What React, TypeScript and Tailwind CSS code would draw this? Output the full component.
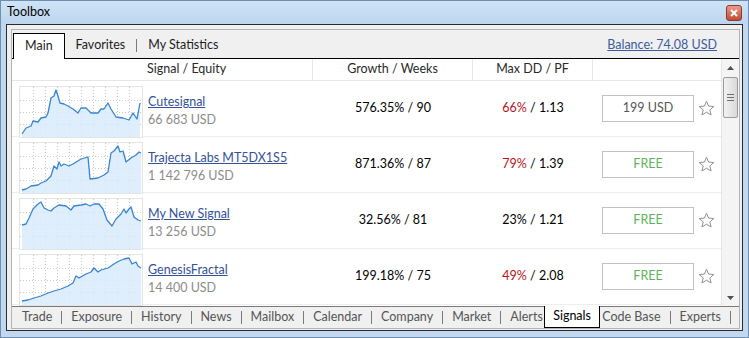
import React from 'react';

interface SignalRow {
  name: string;
  equity: string;
  growth: string;
  dd: string;
  ddRed: boolean;
  pf: string;
  price: string;
  points: string;
}

const rows: SignalRow[] = [
  {
    name: 'Cutesignal',
    equity: '66 683 USD',
    growth: '576.35% / 90',
    dd: '66%',
    ddRed: true,
    pf: '1.13',
    price: '199 USD',
    points:
      '2,47 6,41 11,39 13,34 18,35 21,31 26,30 28,26 31,11 34,9 36,3 38,9 40,16 44,17 48,19 53,22 58,26 61,21 66,21 71,26 78,26 81,22 84,22 88,16 91,22 96,30 103,31 109,33 113,26 117,32 120,16',
  },
  {
    name: 'Trajecta Labs MT5DX1S5',
    equity: '1 142 796 USD',
    growth: '871.36% / 87',
    dd: '79%',
    ddRed: true,
    pf: '1.39',
    price: 'FREE',
    points:
      '2,47 6,46 11,43 18,42 21,40 26,38 31,33 34,23 37,26 39,19 41,23 44,21 49,23 53,21 61,16 68,14 70,36 78,35 84,32 88,29 91,10 94,8 98,3 100,9 103,8 106,19 111,15 116,12 119,9 121,10',
  },
  {
    name: 'My New Signal',
    equity: '13 256 USD',
    growth: '32.56% / 81',
    dd: '23%',
    ddRed: false,
    pf: '1.21',
    price: 'FREE',
    points:
      '2,26 6,25 9,19 13,10 18,5 21,3 24,9 28,11 31,12 34,9 39,6 46,7 51,11 54,7 61,6 66,5 70,7 74,5 79,5 83,10 87,21 92,27 96,20 101,15 104,10 106,14 109,10 111,8 114,18 118,21 121,22',
  },
  {
    name: 'GenesisFractal',
    equity: '14 400 USD',
    growth: '199.18% / 75',
    dd: '49%',
    ddRed: true,
    pf: '2.08',
    price: 'FREE',
    points:
      '2,46 8,45 14,43 21,41 28,38 34,36 41,34 48,31 53,28 56,21 59,23 66,19 71,17 74,13 78,17 81,15 88,13 94,9 99,6 104,4 109,3 112,9 116,7 118,11 121,13',
  },
];

const bottomTabs = ['Trade', 'Exposure', 'History', 'News', 'Mailbox', 'Calendar', 'Company', 'Market', 'Alerts', 'Signals', 'Code Base', 'Experts'];

function Equity({ points }: { points: string }) {
  const pts = points.split(' ');
  const first = pts[0].split(',')[0];
  const last = pts[pts.length - 1].split(',')[0];
  const area = `${first},50 ${points} ${last},50`;
  const vx = [13, 25, 37, 49, 61, 73, 85, 97, 109];
  const hy = [13, 25, 37];
  return (
    <svg width="122" height="50" viewBox="0 0 122 50" className="block border border-[#e4e4e4] bg-white box-content">
      {vx.map((x) => (
        <line key={'v' + x} x1={x + 0.5} y1="0" x2={x + 0.5} y2="50" stroke="#c9c9c9" strokeDasharray="1 2" />
      ))}
      {hy.map((y) => (
        <line key={'h' + y} x1="0" y1={y + 0.5} x2="122" y2={y + 0.5} stroke="#c9c9c9" strokeDasharray="1 2" />
      ))}
      <polygon points={area} fill="#d8ebfc" fillOpacity="0.85" />
      <polyline points={points} fill="none" stroke="#3a84d4" strokeWidth="1.3" strokeLinejoin="round" />
    </svg>
  );
}

function Star() {
  return (
    <svg width="17" height="17" viewBox="0 0 17 17" className="block">
      <polygon
        points="8.5,1.2 10.6,6.1 15.8,6.5 11.8,9.9 13.1,15 8.5,12.2 3.9,15 5.2,9.9 1.2,6.5 6.4,6.1"
        fill="#fff"
        stroke="#8f8f8f"
        strokeWidth="1"
        strokeLinejoin="round"
      />
    </svg>
  );
}

function Sep({ gap = 'mx-[9px]' }: { gap?: string }) {
  return <div className={`w-px h-[13px] bg-[#7a7a7a] ${gap}`} />;
}

export default function App() {
  return (
    <div
      className="w-[749px] h-[338px] flex flex-col bg-[#c2d8ef] border border-[#6f8fb0] text-[12px] text-[#1e1e1e] overflow-hidden whitespace-nowrap"
      style={{ fontFamily: 'Lato, "Noto Sans", sans-serif' }}
    >
      {/* title bar */}
      <div className="h-[23px] flex items-center pl-[6px] pr-[6px] bg-gradient-to-b from-[#cfe3f6] to-[#bcd5ee]">
        <span className="text-[12.5px] text-black leading-none">Toolbox</span>
        <div className="ml-auto mt-[1px] w-[16px] h-[16px] rounded-[3px] border border-[#8b3a2c] bg-gradient-to-b from-[#e99a8b] to-[#c24a34] flex items-center justify-center">
          <svg width="8" height="8" viewBox="0 0 8 8">
            <path d="M1 1 L7 7 M7 1 L1 7" stroke="#fff" strokeWidth="2" />
          </svg>
        </div>
      </div>

      {/* client */}
      <div className="mx-[5px] h-[307px] border border-[#2a2a2a] bg-[#f0f0f0] pt-[4px] pl-[4px] pr-[2px]">
        <div className="h-[300px] border border-[#b4b4b4] flex flex-col">
          {/* top tabs */}
          <div className="h-[28px] flex items-end pl-[1px] pr-[22px] relative text-[12.5px]">
            <div className="relative z-10 -mb-px h-[26px] px-[11px] bg-white border border-b-0 border-black flex items-center">Main</div>
            <div className="h-[25px] flex items-center pl-[11px]">Favorites</div>
            <div className="h-[25px] flex items-center">
              <Sep gap="mx-[11px]" />
            </div>
            <div className="h-[25px] flex items-center">My Statistics</div>
            <a href="#" className="ml-auto self-center mt-[3px] text-[#3b5da0] underline">Balance: 74.08 USD</a>
          </div>

          {/* content */}
          <div className="h-[248px] border-t border-black bg-white flex">
            <div className="flex-1 flex flex-col">
              <div className="h-[22px] flex border-b border-[#e6e6e6] text-[#2a2a2a] text-[12.5px]">
                <div className="w-[301px] pl-[135px] flex items-center border-r border-[#e6e6e6]">Signal / Equity</div>
                <div className="w-[160px] flex items-center justify-center border-r border-[#e6e6e6]">Growth / Weeks</div>
                <div className="w-[120px] flex items-center justify-center border-r border-[#e6e6e6]">Max DD / PF</div>
                <div className="flex-1" />
              </div>
              {rows.map((r) => (
                <div key={r.name} className="h-[56px] shrink-0 flex border-b border-[#ededed]">
                  <div className="w-[301px] flex">
                    <div className="ml-[7px] mt-[5px]">
                      <Equity points={r.points} />
                    </div>
                    <div className="ml-[5px] mt-[13px] flex flex-col gap-[2px] leading-[16px] text-[12.5px]">
                      <a href="#" className="text-[#34519a] underline">{r.name}</a>
                      <span className="text-[#8c8c8c]">{r.equity}</span>
                    </div>
                  </div>
                  <div className="w-[160px] flex items-center justify-center text-black text-[12.5px]">{r.growth}</div>
                  <div className="w-[120px] flex items-center justify-center text-black text-[12.5px]">
                    <span className={r.ddRed ? 'text-[#b81320]' : 'text-black'}>{r.dd}</span>
                    <span>&nbsp;/ {r.pf}</span>
                  </div>
                  <div className="flex-1 flex items-center pl-[9px] gap-[4px]">
                    <div
                      className={`w-[92px] h-[27px] border border-[#c2c2c2] bg-white flex items-center justify-center text-[12.5px] ${
                        r.price === 'FREE' ? 'text-[#5bb55a]' : 'text-[#555555]'
                      }`}
                    >
                      {r.price}
                    </div>
                    <Star />
                  </div>
                </div>
              ))}
            </div>

            {/* scrollbar */}
            <div className="w-[18px] bg-[#f4f4f4] border-l border-[#e6e6e6] flex flex-col items-center">
              <div className="h-[17px] flex items-center justify-center">
                <svg width="7" height="4" viewBox="0 0 7 4">
                  <polygon points="3.5,0 7,4 0,4" fill="#505050" />
                </svg>
              </div>
              <div className="mt-[1px] w-[15px] h-[41px] rounded-[2px] border border-[#9b9b9b] bg-gradient-to-r from-[#f2f2f2] to-[#d9d9d9] flex flex-col items-center justify-center gap-[2px]">
                <div className="w-[7px] h-px bg-[#6e6e6e]" />
                <div className="w-[7px] h-px bg-[#6e6e6e]" />
                <div className="w-[7px] h-px bg-[#6e6e6e]" />
              </div>
              <div className="flex-1" />
              <div className="h-[17px] flex items-center justify-center">
                <svg width="7" height="4" viewBox="0 0 7 4">
                  <polygon points="0,0 7,0 3.5,4" fill="#505050" />
                </svg>
              </div>
            </div>
          </div>

          {/* bottom tabs */}
          <div className="flex-1 border-t border-[#7a7a7a] flex items-start pl-[9px] text-[12.5px]">
            {bottomTabs.map((t, i) => {
              const active = t === 'Signals';
              const nextActive = bottomTabs[i + 1] === 'Signals';
              return (
                <React.Fragment key={t}>
                  {active ? (
                    <div className="relative -mt-px h-[22px] px-[8px] bg-white border border-t-0 border-black flex items-center text-black">
                      {t}
                    </div>
                  ) : (
                    <div className="h-[21px] flex items-center text-[#555555] ml-[1px]">{t}</div>
                  )}
                  {!active && !nextActive && (
                    <div className="h-[21px] flex items-center">
                      <Sep gap="ml-[9px] mr-[8px]" />
                    </div>
                  )}
                  {nextActive && <div className="w-[10px]" />}
                  {active && <div className="w-[9px]" />}
                </React.Fragment>
              );
            })}
          </div>
        </div>
      </div>
    </div>
  );
}
